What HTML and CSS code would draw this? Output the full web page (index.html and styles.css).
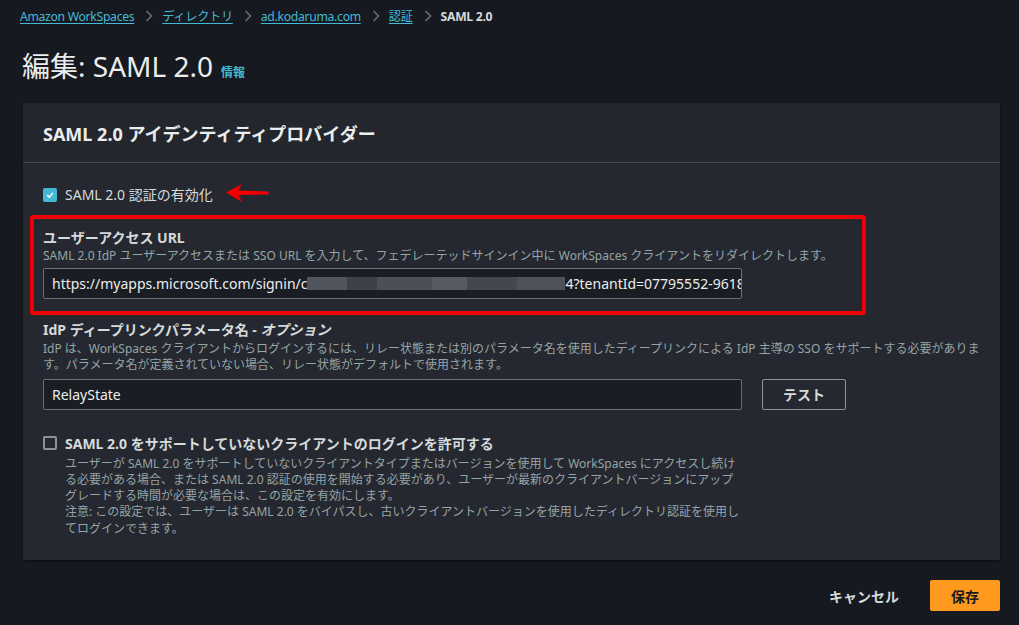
FILE: index.html
```html
<!DOCTYPE html>
<html lang="ja">
<head>
<meta charset="utf-8">
<link rel="stylesheet" href="styles.css">
</head>
<body>
<nav class="crumbs">
  <a href="#">Amazon WorkSpaces</a>
  <span class="sep"><svg width="8" height="12" viewBox="0 0 8 12"><path d="M1.5 1 L6.5 6 L1.5 11" fill="none" stroke="#687078" stroke-width="1.6"/></svg></span>
  <a href="#">ディレクトリ</a>
  <span class="sep"><svg width="8" height="12" viewBox="0 0 8 12"><path d="M1.5 1 L6.5 6 L1.5 11" fill="none" stroke="#687078" stroke-width="1.6"/></svg></span>
  <a href="#">ad.kodaruma.com</a>
  <span class="sep"><svg width="8" height="12" viewBox="0 0 8 12"><path d="M1.5 1 L6.5 6 L1.5 11" fill="none" stroke="#687078" stroke-width="1.6"/></svg></span>
  <a href="#">認証</a>
  <span class="sep"><svg width="8" height="12" viewBox="0 0 8 12"><path d="M1.5 1 L6.5 6 L1.5 11" fill="none" stroke="#687078" stroke-width="1.6"/></svg></span>
  <span class="current">SAML 2.0</span>
</nav>

<header class="page-head">
  <h1>編集: SAML 2.0</h1>
  <a class="info" href="#">情報</a>
</header>

<section class="panel">
  <div class="panel-head">SAML 2.0 アイデンティティプロバイダー</div>
  <div class="panel-body">
    <div class="check-row">
      <span class="box checked"><svg width="14" height="14" viewBox="0 0 14 14"><path d="M3 7.2 L6 10 L11 4" fill="none" stroke="#ffffff" stroke-width="2"/></svg></span>
      <span class="check-label">SAML 2.0 認証の有効化</span>
      <svg class="arrow" width="43" height="20" viewBox="0 0 43 20"><path d="M0 9.5 L16 1 L12.5 7.5 L42 8.5 L43 10 L42 11.5 L12.5 12 L16 19 Z" fill="#f00000"/></svg>
    </div>

    <div class="field highlight">
      <div class="label">ユーザーアクセス URL</div>
      <div class="desc">SAML 2.0 IdP ユーザーアクセスまたは SSO URL を入力して、フェデレーテッドサインイン中に WorkSpaces クライアントをリダイレクトします。</div>
      <div class="input wide"><span class="clip">https://myapps.microsoft.com/signin/c<span class="blur b1"></span><span class="blur b2"></span><span class="blur b3"></span><span class="blur b4"></span><span class="blur b5"></span><span class="blur b6"></span>4?tenantId=07795552-9618</span></div>
    </div>

    <div class="field plain">
      <div class="label tall">IdP ディープリンクパラメータ名 - <i>オプション</i></div>
      <div class="desc">IdP は、WorkSpaces クライアントからログインするには、リレー状態または別のパラメータ名を使用したディープリンクによる IdP 主導の SSO をサポートする必要がありま<br>す。パラメータ名が定義されていない場合、リレー状態がデフォルトで使用されます。</div>
      <div class="input-row">
        <div class="input wide">RelayState</div>
        <button class="btn-test">テスト</button>
      </div>
    </div>

    <div class="check-row top">
      <span class="box"></span>
      <div>
        <div class="check-label strong">SAML 2.0 をサポートしていないクライアントのログインを許可する</div>
        <div class="desc long">ユーザーが SAML 2.0 をサポートしていないクライアントタイプまたはバージョンを使用して WorkSpaces にアクセスし続け<br>る必要がある場合、または SAML 2.0 認証の使用を開始する必要があり、ユーザーが最新のクライアントバージョンにアップ<br>グレードする時間が必要な場合は、この設定を有効にします。<br>注意: この設定では、ユーザーは SAML 2.0 をバイパスし、古いクライアントバージョンを使用したディレクトリ認証を使用し<br>てログインできます。</div>
      </div>
    </div>
  </div>
</section>

<footer class="actions">
  <button class="btn-link">キャンセル</button>
  <button class="btn-primary">保存</button>
</footer>
</body>
</html>
```

FILE: styles.css
```css
* { box-sizing: border-box; }
body {
  margin: 0;
  background: #16191f;
  color: #d5dbdb;
  font-family: "Noto Sans", "Noto Sans CJK JP", sans-serif;
  font-size: 14px;
  width: 1019px;
  height: 625px;
  overflow: hidden;
}
.crumbs {
  display: flex;
  align-items: center;
  height: 32px;
  padding: 0 0 0 20px;
  font-size: 12.2px;
  letter-spacing: -0.3px;
}
.crumbs a {
  color: #44b9d6;
  text-decoration: underline;
  text-underline-offset: 2px;
}
.crumbs .sep {
  display: inline-flex;
  margin: 0 9px 0 11px;
}
.crumbs .current {
  font-weight: 700;
  color: #d5dbdb;
}
.page-head {
  display: flex;
  align-items: baseline;
  gap: 8px;
  padding: 16px 0 0 22px;
  height: 71px;
}
.page-head h1 {
  margin: 0;
  font-size: 28px;
  font-weight: 400;
  color: #eaeded;
  line-height: 36px;
}
.page-head .info {
  color: #44b9d6;
  font-size: 12px;
  font-weight: 700;
  text-decoration: none;
}
.panel {
  margin-left: 23px;
  width: 977px;
  height: 457px;
  background: #252830;
  box-shadow: 0 1px 2px rgba(0,0,0,0.5);
}
.panel-head {
  height: 60px;
  display: flex;
  align-items: center;
  padding-left: 20px;
  font-size: 18px;
  font-weight: 700;
  color: #eaeded;
  background: #23262d;
  border-bottom: 1px solid #414750;
}
.panel-body {
  padding: 24px 20px 0 20px;
  display: flex;
  flex-direction: column;
}
.check-row {
  display: flex;
  align-items: center;
  gap: 8px;
  height: 16px;
}
.check-row.top {
  align-items: flex-start;
  height: auto;
  margin-top: 25px;
}
.box {
  width: 14px;
  height: 14px;
  border: 2px solid #879596;
  border-radius: 2px;
  flex: none;
  display: inline-flex;
  align-items: center;
  justify-content: center;
}
.check-row.top .box { margin-top: 1.5px; }
.box.checked {
  background: #44b9d6;
  border-color: #44b9d6;
}
.box.checked svg { width: 12px; height: 12px; }
.check-label { color: #d5dbdb; line-height: 16px; }
.check-label.strong { font-weight: 700; line-height: 17px; }
.arrow { margin-left: 5px; margin-top: -4px; }
.field.highlight {
  margin: 12px 0 0 -13px;
  width: 836px;
  border: 4px solid #f00000;
  border-radius: 3px;
  padding: 9px 9px 12px 9px;
}
.field.plain { margin-top: 4px; }
.label {
  font-weight: 700;
  color: #d5dbdb;
  line-height: 20px;
}
.label.tall { line-height: 22px; }
.label i { font-style: italic; }
.desc {
  font-size: 12px;
  color: #95a5a6;
  line-height: 16.5px;
}
.desc.long { margin-top: 4px; line-height: 16.3px; }
.input {
  height: 31px;
  margin-top: 3px;
  background: #1a1d23;
  border: 1px solid #687078;
  border-radius: 2px;
  padding: 0 8px;
  display: flex;
  align-items: center;
  white-space: nowrap;
  overflow: hidden;
  color: #eaeded;
  font-size: 14px;
}
.clip { display: flex; align-items: center; }
.input.wide { width: 699px; }
.blur {
  display: inline-block;
  height: 13px;
  background: #4a4f57;
  flex: none;
}
.b1 { width: 40px; background: #51565e; }
.b2 { width: 30px; background: #3d424a; }
.b3 { width: 55px; background: #4b5058; }
.b4 { width: 35px; background: #565b62; }
.b5 { width: 50px; background: #434850; }
.b6 { width: 48px; background: #4e535b; }
.input-row {
  display: flex;
  align-items: center;
  gap: 20px;
  margin-top: 5px;
}
.input-row .input { margin-top: 0; }
.btn-test {
  width: 84px;
  height: 31px;
  background: transparent;
  border: 1px solid #879596;
  border-radius: 2px;
  color: #d5dbdb;
  font: inherit;
  font-weight: 700;
}
.actions {
  display: flex;
  justify-content: flex-end;
  align-items: center;
  gap: 31px;
  padding: 20px 19px 0 0;
}
.btn-link {
  background: none;
  border: 0;
  padding: 0;
  color: #d5dbdb;
  font: inherit;
  font-weight: 700;
}
.btn-primary {
  width: 70px;
  height: 31px;
  background: #ff9a1f;
  border: 0;
  border-radius: 2px;
  color: #16191f;
  font: inherit;
  font-weight: 700;
}
```
